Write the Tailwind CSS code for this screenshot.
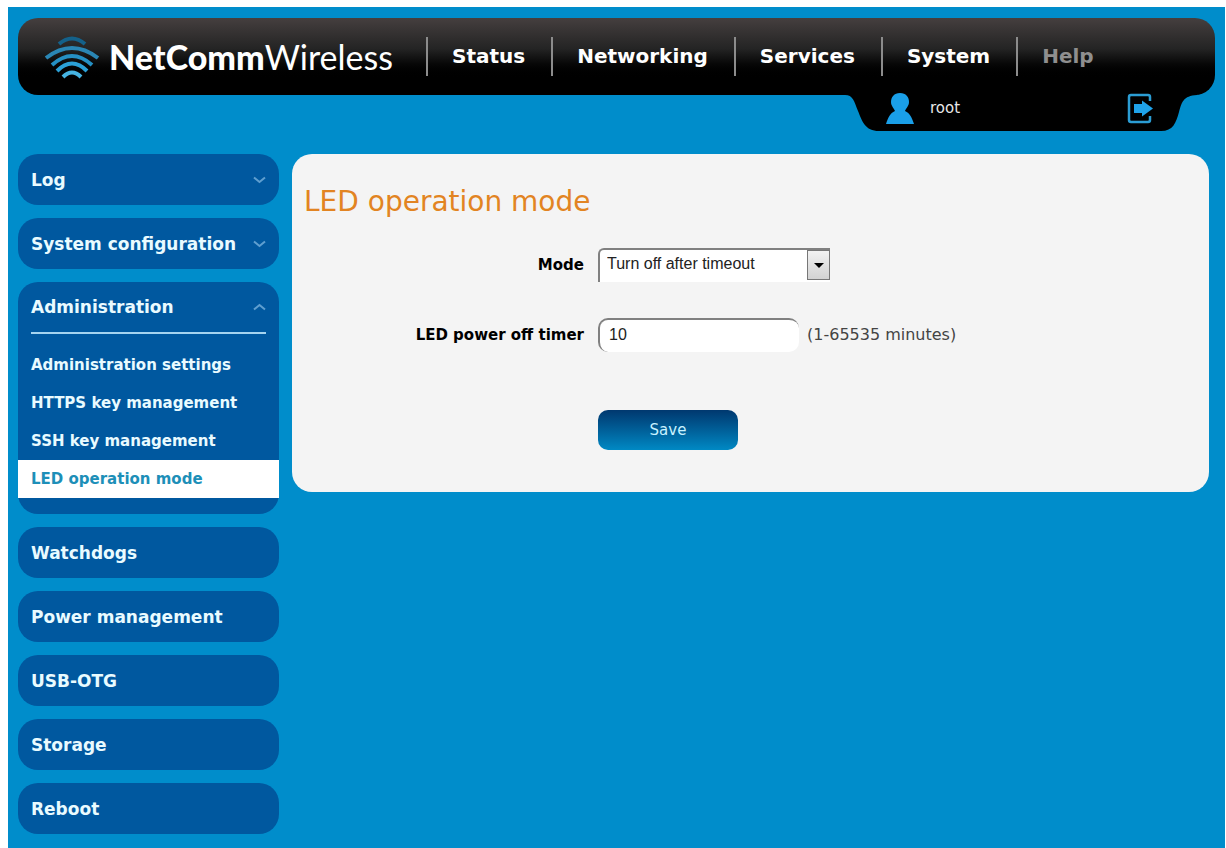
<!DOCTYPE html>
<html lang="en">

<head>
  <meta charset="UTF-8">
  <meta name="viewport" content="width=device-width, initial-scale=1.0">
  <script src="https://cdn.jsdelivr.net/npm/@tailwindcss/browser@4"></script>
  <title>LED operation mode</title>
</head>

<body class="bg-white font-['DejaVu_Sans',Verdana,sans-serif]">
  <div class="min-h-screen bg-[#008dcb] border-t-[7px] border-l-8 border-r border-white pt-[11px] px-[10px] pb-4">

    <!-- Top bar -->
    <header>
      <div class="flex items-center h-[77px] rounded-[20px] bg-linear-to-b from-[#453f3f] via-[#242424] via-40% to-black to-80% pl-[26px]">
        <a href="#" class="flex items-center gap-2 w-[382px] text-white font-[Lato,sans-serif] text-[34px] leading-9">
          <svg class="w-[57px] h-[46px] shrink-0" viewBox="0 0 57 46" fill="none" stroke-width="4" stroke-linecap="butt" aria-hidden="true">
            <path d="M15 10 Q28 -1 41 10" stroke="#14618a" />
            <path d="M2 24 Q28 4 54 24" stroke="#2a86b4" />
            <path d="M8 31 Q28 13 48 31" stroke="#2590c4" />
            <path d="M13 37 Q28 22 43 37" stroke="#2ba0d6" />
            <path d="M19 43 Q28 34 37 43" stroke="#46b4e2" />
          </svg>
          <span><span class="font-black">NetComm</span>Wireless</span>
        </a>
        <nav class="flex items-center text-xl leading-[39px] font-bold text-white">
          <a href="#" class="border-l-2 border-[#8c8c8c] pl-6 pr-[26px]">Status</a>
          <a href="#" class="border-l-2 border-[#8c8c8c] pl-6 pr-[26px]">Networking</a>
          <a href="#" class="border-l-2 border-[#8c8c8c] pl-6 pr-[26px]">Services</a>
          <a href="#" class="border-l-2 border-[#8c8c8c] pl-6 pr-[26px]">System</a>
          <a href="#" class="border-l-2 border-[#8c8c8c] pl-6 pr-[26px] text-[#8f8f8f]">Help</a>
        </nav>
      </div>

      <!-- User tab, hangs below the bar -->
      <div class="flex justify-end pr-[18px] -mt-[5px]">
        <div class="relative w-[352px] h-[41px]">
          <svg class="absolute inset-0 w-full h-full" viewBox="0 0 352 41" aria-hidden="true">
            <path d="M0 0 H352 V5 C338 6 337 12 334 22 C331 33 328 41 316 41 H34 C20 41 17 31 13 21 C9 11 8 5 0 5 Z" fill="#000" />
          </svg>
          <div class="relative flex items-center justify-between h-9 pl-[41px] pr-11">
            <div class="flex items-center gap-4">
              <svg class="w-7 h-[31px]" viewBox="0 0 28 31" fill="#1a9fe8" aria-hidden="true">
                <path d="M14 0 C20 0 23 4 23 9 C23 13 20 15 19 18 C24 20 26 25 28 31 H0 C2 25 4 20 9 18 C8 15 5 13 5 9 C5 4 8 0 14 0 Z" />
              </svg>
              <span class="text-[15px] leading-5 text-[#e8e8e8]">root</span>
            </div>
            <button type="button" aria-label="Log out" class="cursor-pointer">
              <svg class="w-[26px] h-[31px] block" viewBox="0 0 26 31" fill="none" aria-hidden="true">
                <path d="M23 8 V4 Q23 2 21 2 H4 Q2 2 2 4 V27 Q2 29 4 29 H21 Q23 29 23 27 V23" stroke="#2b9dd4" stroke-width="2.5" />
                <path d="M7 11 H15 V7.500 L26 15.500 L15 23.500 V20 H7 Z" fill="#1fa3ea" />
              </svg>
            </button>
          </div>
        </div>
      </div>
    </header>

    <div class="flex items-start gap-[13px] mt-[23px]">
      <!-- Side menu -->
      <aside class="w-[261px] shrink-0 flex flex-col gap-[13px] text-[17px] leading-6 font-bold text-[#e9fbff]">
        <a href="#" class="flex items-center justify-between h-[51px] rounded-[20px] bg-[#00589f] px-[13px]">
          Log
          <svg class="w-[13px] h-2" viewBox="0 0 13 8" fill="none" stroke="#5f9fd0" stroke-width="2" aria-hidden="true"><path d="M1 1.500 L6.500 6 L12 1.500" /></svg>
        </a>
        <a href="#" class="flex items-center justify-between h-[51px] rounded-[20px] bg-[#00589f] px-[13px]">
          System configuration
          <svg class="w-[13px] h-2" viewBox="0 0 13 8" fill="none" stroke="#5f9fd0" stroke-width="2" aria-hidden="true"><path d="M1 1.500 L6.500 6 L12 1.500" /></svg>
        </a>
        <section class="rounded-[20px] bg-[#00589f] pb-4">
          <a href="#" class="flex items-center justify-between h-[52px] mx-[13px] border-b-2 border-[#a5d4f0]">
            Administration
            <svg class="w-[13px] h-2" viewBox="0 0 13 8" fill="none" stroke="#5f9fd0" stroke-width="2" aria-hidden="true"><path d="M1 6.500 L6.500 2 L12 6.500" /></svg>
          </a>
          <div class="mt-3 text-[15px] leading-[38px]">
            <a href="#" class="block pl-[13px]">Administration settings</a>
            <a href="#" class="block pl-[13px]">HTTPS key management</a>
            <a href="#" class="block pl-[13px]">SSH key management</a>
            <a href="#" class="block pl-[13px] bg-white text-[#1d8fb8]">LED operation mode</a>
          </div>
        </section>
        <a href="#" class="flex items-center h-[51px] rounded-[20px] bg-[#00589f] px-[13px]">Watchdogs</a>
        <a href="#" class="flex items-center h-[51px] rounded-[20px] bg-[#00589f] px-[13px]">Power management</a>
        <a href="#" class="flex items-center h-[51px] rounded-[20px] bg-[#00589f] px-[13px]">USB-OTG</a>
        <a href="#" class="flex items-center h-[51px] rounded-[20px] bg-[#00589f] px-[13px]">Storage</a>
        <a href="#" class="flex items-center h-[51px] rounded-[20px] bg-[#00589f] px-[13px]">Reboot</a>
      </aside>

      <!-- Content -->
      <main class="flex-1 mr-[6px] rounded-[20px] bg-[#f4f4f4] pt-7 pb-[42px] px-3">
        <h1 class="text-[28px] leading-10 text-[#e28422]">LED operation mode</h1>
        <form class="grid grid-cols-[280px_1fr] gap-x-[14px] items-center mt-[26px] text-[15px] leading-5 text-[#444]">
          <label for="mode" class="text-right font-bold text-black">Mode</label>
          <div class="relative w-[232px]">
            <select id="mode"
              class="block appearance-none w-full h-[34px] bg-white border-t-2 border-l-2 border-[#808080] rounded-tl-md pl-[7px] pb-1 font-['Liberation_Sans',Arial,sans-serif] text-base text-[#222]">
              <option>Always on</option>
              <option selected>Turn off after timeout</option>
            </select>
            <span class="absolute right-0 top-[2px] flex items-center justify-center w-[23px] h-[30px] border border-[#777] bg-linear-to-b from-[#f2f2f2] to-[#d2d2d2] pointer-events-none">
              <svg class="w-[10px] h-[5px]" viewBox="0 0 10 5" aria-hidden="true"><path d="M0 0 H10 L5 5 Z" fill="#000" /></svg>
            </span>
          </div>

          <label for="timer" class="text-right font-bold text-black mt-9">LED power off timer</label>
          <div class="flex items-center gap-2 mt-9">
            <input id="timer" type="text" value="10"
              class="w-[201px] h-[34px] bg-white border-t-2 border-l-2 border-[#808080] rounded-[10px] pl-[9px] pb-[3px] font-['Liberation_Sans',Arial,sans-serif] text-base text-[#222]" />
            <span class="text-base">(1-65535 minutes)</span>
          </div>

          <button type="submit"
            class="col-start-2 justify-self-start w-[140px] h-10 mt-[58px] rounded-[10px] bg-linear-to-b from-[#00386f] to-[#0089c4] text-[15px] text-[#c8f2ff] cursor-pointer">Save</button>
        </form>
      </main>
    </div>
  </div>
</body>

</html>
